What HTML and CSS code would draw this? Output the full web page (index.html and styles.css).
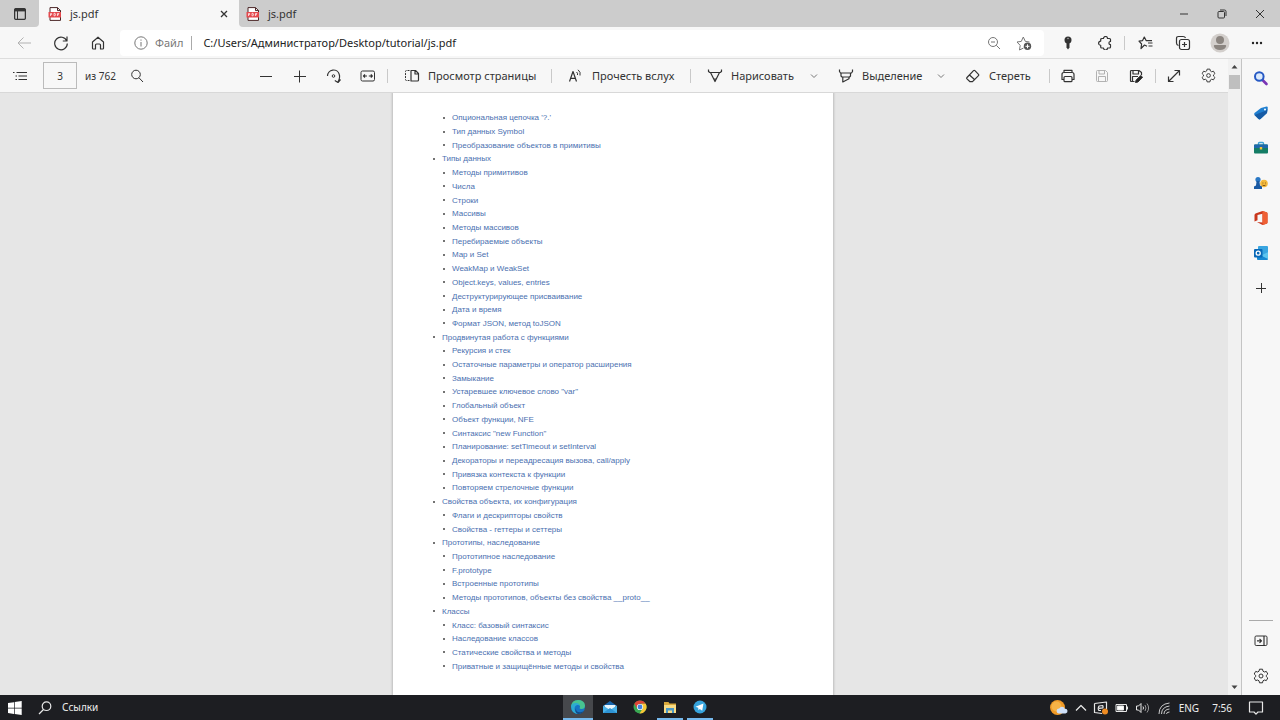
FILE: index.html
```
<!DOCTYPE html>
<html lang="ru">
<head>
<meta charset="utf-8">
<title>js.pdf</title>
<link rel="stylesheet" href="styles.css">
</head>
<body>
<svg class="defs" aria-hidden="true">
  <symbol id="pdf" viewBox="0 0 14 14"><path d="M2 .6h7.500l3 3v9.800H2z" fill="#fff" stroke="#4a2526"/><path d="M9.500.6v3h3" fill="none" stroke="#4a2526"/><path d="M.5 5h12.500v5.500H.5z" fill="#e5484d"/><path d="M2.500 9V6.500h1.200v1.200H2.500M6 6.300v2.500h1l.6-.6V7L7 6.300zM9.500 9V6.500h1.700M9.500 7.700H11" fill="none" stroke="#fff" stroke-width=".7"/></symbol>
  <symbol id="chev" viewBox="0 0 8 8"><path d="M1 2.500l3 3 3-3"/></symbol>
  <symbol id="gear" viewBox="0 0 16 16"><path d="M6.500 1.200h3l.5 2 1.300.8 2-.6 1.500 2.600L13.300 7.400v1.200l1.500 1.400-1.500 2.600-2-.6-1.300.8-.5 2h-3l-.5-2-1.300-.8-2 .6L1.200 10l1.500-1.400V7.400L1.200 6l1.500-2.600 2 .6L6 3.200z"/><circle cx="8" cy="8" r="2"/></symbol>
</svg>

<header class="tabs">
  <button class="tab-menu" aria-label="Меню вкладок"><svg class="ic" width="12" height="12" viewBox="0 0 12 12"><rect x=".6" y=".6" width="10.800" height="10.800" rx="1.500" stroke-width="1.300"/><path d="M.6 2.200h10.800" stroke-width="2.400"/><path d="M3.500 3v8" stroke-width="1"/></svg></button>
  <div class="tab active"><svg width="14" height="14"><use href="#pdf"/></svg><span class="tab-name">js.pdf</span><button class="tab-close" aria-label="Закрыть вкладку"><svg class="ic" width="8" height="8" viewBox="0 0 8 8"><path d="M1 1l6 6M7 1L1 7" stroke-width="1.300"/></svg></button></div>
  <div class="tab rest"><svg width="14" height="14"><use href="#pdf"/></svg><span class="tab-name">js.pdf</span></div>
  <div class="window-controls">
    <button aria-label="Свернуть"><svg class="ic" width="10" height="10" viewBox="0 0 10 10"><path d="M1 5h8"/></svg></button>
    <button aria-label="Восстановить"><svg class="ic" width="10" height="10" viewBox="0 0 10 10"><rect x="1" y="2.500" width="6.500" height="6.500" rx="1"/><path d="M3 1h4.500Q9 1 9 2.500V7"/></svg></button>
    <button aria-label="Закрыть"><svg class="ic" width="10" height="10" viewBox="0 0 10 10"><path d="M1 1l8 8M9 1L1 9"/></svg></button>
  </div>
</header>

<nav class="address-row">
  <button class="nav-btn disabled" aria-label="Назад"><svg class="ic" width="16" height="16" viewBox="0 0 16 16"><path d="M15 8H2M7.500 2.500L2 8l5.500 5.500"/></svg></button>
  <button class="nav-btn" aria-label="Обновить"><svg class="ic" width="16" height="16" viewBox="0 0 16 16"><path d="M13.800 6A6.300 6.300 0 1 0 14.300 8.500M14 1.500V6H9.800" stroke-width="1.200"/></svg></button>
  <button class="nav-btn" aria-label="Домой"><svg class="ic" width="14" height="14" viewBox="0 0 14 14"><path d="M1.500 6L7 1.200 12.500 6v6.200q0 .8-.8.800H9.500V9q0-1-1-1h-3q-1 0-1 1v4H2.300q-.8 0-.8-.8z" stroke-width="1.200"/></svg></button>
  <div class="address">
    <svg class="ic soft" width="14" height="14" viewBox="0 0 14 14"><circle cx="7" cy="7" r="6.200"/><path d="M7 6v4.500M7 3.500v1.200"/></svg>
    <span class="scheme">Файл</span>
    <input class="url" aria-label="Адрес" value="C:/Users/Администратор/Desktop/tutorial/js.pdf">
    <button class="addr-btn" aria-label="Масштаб"><svg class="ic soft" width="14" height="14" viewBox="0 0 14 14"><circle cx="6" cy="6" r="4.500"/><path d="M9.300 9.300l3.700 3.700M4 6h4"/></svg></button>
    <button class="addr-btn" aria-label="В избранное"><svg class="ic" width="16" height="16" viewBox="0 0 16 16"><path d="M7.500 13L3.500 15l.7-4.600L1 7l4.300-.6 2-4.400 2 4.400L13.500 7" stroke="#777"/><circle cx="11.500" cy="11.300" r="3.700" fill="#555" stroke="none"/><path d="M11.500 9.300v4M9.500 11.300h4" stroke="#fff"/></svg></button>
  </div>
  <button class="nav-btn" aria-label="Пароли"><svg width="10" height="14" viewBox="0 0 10 14"><circle cx="5" cy="4" r="3.500" fill="#333"/><path d="M3.500 6h3v5.500L5 13.500l-1.500-2z" fill="#333"/><circle cx="5" cy="2.500" r=".8" fill="#aaa"/></svg></button>
  <button class="nav-btn" aria-label="Расширения"><svg class="ic" width="14" height="14" viewBox="0 0 14 14"><path d="M4 2.500h1.500a2 2 0 0 1 4 0h2q1 0 1 1V5.500a1.600 1.600 0 0 0 0 3.200V11q0 1-1 1H9.500a2 2 0 0 1-4 0H3.700q-1 0-1-1V9.300a2.100 2.100 0 0 1 0-4.200V3.500q0-1 1.300-1z" stroke-width="1.200"/></svg></button>
  <span class="sep"></span>
  <button class="nav-btn" aria-label="Избранное"><svg class="ic" width="16" height="16" viewBox="0 0 16 16"><path d="M9 11.200L6.500 10 3 13.500 3.600 9 1 6.200l3.600-.6L6.300 2l1.800 3.600H14M10 8h4.500M10.500 11h4" stroke-width="1.200"/></svg></button>
  <button class="nav-btn" aria-label="Коллекции"><svg class="ic" width="16" height="16" viewBox="0 0 16 16"><path d="M3.500 10.500Q1.500 10 1.500 8V3.500q0-2 2-2H8q2 0 2.500 1.500" stroke-width="1.200"/><rect x="4.500" y="4.500" width="10" height="10" rx="2" stroke-width="1.200"/><path d="M9.500 7v5M7 9.500h5" stroke-width="1.200"/></svg></button>
  <button class="nav-btn" aria-label="Профиль"><svg width="20" height="20" viewBox="0 0 20 20"><circle cx="10" cy="10" r="9.500" fill="#d3cfcc"/><circle cx="10" cy="7" r="4" fill="#8b8580"/><path d="M3.800 13q0-1 1-1h10.400q1 0 1 1-1 4-6.200 4t-6.200-4z" fill="#8b8580"/></svg></button>
  <button class="nav-btn" aria-label="Меню"><svg width="14" height="4" viewBox="0 0 14 4"><g fill="#222"><circle cx="3" cy="2" r="1.200"/><circle cx="7" cy="2" r="1.200"/><circle cx="11" cy="2" r="1.200"/></g></svg></button>
</nav>

<main class="workspace">
  <section class="viewer">
    <div class="toolbar">
      <button class="tool" aria-label="Содержание"><svg class="ic" width="14" height="12" viewBox="0 0 14 12"><path d="M3.500 2.500H14M5.500 6H14M5.500 9.500H14M0 2.500h1.500M2.500 6H4M2.500 9.500H4" stroke-width="1.200"/></svg></button>
      <input class="page-no" aria-label="Страница" value="3">
      <span class="page-total">из 762</span>
      <button class="tool" aria-label="Найти"><svg class="ic" width="14" height="14" viewBox="0 0 14 14"><circle cx="6" cy="5.500" r="4.300"/><path d="M9 8.800l4 4.200"/></svg></button>
      <div class="zoom-group">
        <button class="tool" aria-label="Уменьшить"><svg class="ic" width="14" height="14" viewBox="0 0 14 14"><path d="M1 7.500h12"/></svg></button>
        <button class="tool" aria-label="Увеличить"><svg class="ic" width="14" height="14" viewBox="0 0 14 14"><path d="M1 7.500h12M6.500 1.500v12"/></svg></button>
        <button class="tool" aria-label="Повернуть"><svg class="ic" width="16" height="16" viewBox="0 0 16 16"><path d="M1.500 8A6 6 0 0 1 13.300 6.500Q14.300 9.500 12 14M8.800 12.500L12 14.500 14.500 11.500" stroke-width="1.200"/><circle cx="7.500" cy="8" r="1.300"/></svg></button>
        <button class="tool" aria-label="По ширине"><svg class="ic" width="16" height="12" viewBox="0 0 16 12"><rect x="1" y="1" width="13.500" height="10" rx="1.500"/><path d="M3.500 6H7M8.800 6h3.500M5 4.500L3.500 6 5 7.500M10.800 4.500L12.300 6l-1.500 1.500" stroke-width="1.200"/></svg></button>
      </div>
      <span class="sep"></span>
      <button class="tool labelled view"><svg class="ic" width="16" height="14" viewBox="0 0 16 14"><path d="M5.500 1.500h-3q-1 0-1 1v8q0 1 1 1h3" stroke-dasharray="2 1"/><path d="M7 1.500h4.500l3 3V11q0 1-1 1H7zM11 1.500V5h3.500" stroke-width="1.200"/></svg>Просмотр страницы</button>
      <span class="sep"></span>
      <button class="tool labelled read"><svg class="ic" width="16" height="14" viewBox="0 0 16 14"><path d="M1.500 12.500L5 2.500l3.500 10M2.700 9.300h4.800" stroke-width="1.200"/><path d="M8.500 3q1.500 1 1 3M10 .8q3 2.200 2 5.700"/></svg>Прочесть вслух</button>
      <span class="sep"></span>
      <button class="tool labelled draw"><svg class="ic" width="16" height="14" viewBox="0 0 16 14"><path d="M1.500.5v2l1.300 1h10.400l1.300-1v-2M3.500 3.500L8 12.500l4.500-9M6.500 10h3" stroke-width="1.200"/></svg>Нарисовать<svg class="ic chev" width="8" height="8"><use href="#chev"/></svg></button>
      <button class="tool labelled mark"><svg class="ic" width="16" height="14" viewBox="0 0 16 14"><path d="M1.500.5v2l1 1.500h11l1-1.500v-2M3 4v3l1 1h7.500l1-1V4M4.800 8v5L11 9.800V8" stroke-width="1.200"/></svg>Выделение<svg class="ic chev" width="8" height="8"><use href="#chev"/></svg></button>
      <button class="tool labelled erase"><svg class="ic" width="16" height="14" viewBox="0 0 16 14"><path d="M2 8.500L8.500 1.700q.7-.7 1.400 0l3.600 3.600q.7.700 0 1.400L7.500 12.700H5L2 9.900q-.7-.7 0-1.400zM4.500 6L10 11" stroke-width="1.200"/></svg>Стереть</button>
      <div class="file-group">
        <span class="sep"></span>
        <button class="tool" aria-label="Печать"><svg class="ic" width="16" height="14" viewBox="0 0 16 14"><path d="M4 3.500V1.300h8v2.200M4 10.500H2V5.500q0-2 2-2h8q2 0 2 2v5h-2" stroke-width="1.200"/><rect x="4" y="7.500" width="8" height="5.200" rx="1" stroke-width="1.200"/></svg></button>
        <button class="tool disabled" aria-label="Сохранить"><svg class="ic" width="14" height="14" viewBox="0 0 14 14"><path d="M1.500 2.500q0-1 1-1h8l2 2v8q0 1-1 1h-9q-1 0-1-1zM4 1.500V5h5.500V1.500M3.500 12.500v-5h7v5"/></svg></button>
        <button class="tool" aria-label="Сохранить как"><svg class="ic" width="14" height="14" viewBox="0 0 14 14"><path d="M5.500 12.500h-3q-1 0-1-1v-9q0-1 1-1h7.500l2.500 2V6M4 1.500V5h5.500V1.500M3.500 12V7.500H9" stroke-width="1.200"/><path d="M6.500 13.500l.6-2.500L11.800 6.500l1.800 1.700L9 13z" fill="#222"/></svg></button>
        <span class="sep"></span>
        <button class="tool" aria-label="Во весь экран"><svg class="ic" width="14" height="14" viewBox="0 0 14 14"><path d="M1.500 12.500l11-11M7.500 1.500h5v5M1.500 7.500v5h5" stroke-width="1.200"/></svg></button>
        <button class="tool" aria-label="Параметры"><svg class="ic" width="15" height="15"><use href="#gear"/></svg></button>
      </div>
    </div>
    <div class="canvas">
      <article class="page">
        <ul class="toc">
          <li class="sub"><a href="#">Опциональная цепочка '?.'</a></li>
          <li class="sub"><a href="#">Тип данных Symbol</a></li>
          <li class="sub"><a href="#">Преобразование объектов в примитивы</a></li>
          <li><a href="#">Типы данных</a></li>
          <li class="sub"><a href="#">Методы примитивов</a></li>
          <li class="sub"><a href="#">Числа</a></li>
          <li class="sub"><a href="#">Строки</a></li>
          <li class="sub"><a href="#">Массивы</a></li>
          <li class="sub"><a href="#">Методы массивов</a></li>
          <li class="sub"><a href="#">Перебираемые объекты</a></li>
          <li class="sub"><a href="#">Map и Set</a></li>
          <li class="sub"><a href="#">WeakMap и WeakSet</a></li>
          <li class="sub"><a href="#">Object.keys, values, entries</a></li>
          <li class="sub"><a href="#">Деструктурирующее присваивание</a></li>
          <li class="sub"><a href="#">Дата и время</a></li>
          <li class="sub"><a href="#">Формат JSON, метод toJSON</a></li>
          <li><a href="#">Продвинутая работа с функциями</a></li>
          <li class="sub"><a href="#">Рекурсия и стек</a></li>
          <li class="sub"><a href="#">Остаточные параметры и оператор расширения</a></li>
          <li class="sub"><a href="#">Замыкание</a></li>
          <li class="sub"><a href="#">Устаревшее ключевое слово "var"</a></li>
          <li class="sub"><a href="#">Глобальный объект</a></li>
          <li class="sub"><a href="#">Объект функции, NFE</a></li>
          <li class="sub"><a href="#">Синтаксис "new Function"</a></li>
          <li class="sub"><a href="#">Планирование: setTimeout и setInterval</a></li>
          <li class="sub"><a href="#">Декораторы и переадресация вызова, call/apply</a></li>
          <li class="sub"><a href="#">Привязка контекста к функции</a></li>
          <li class="sub"><a href="#">Повторяем стрелочные функции</a></li>
          <li><a href="#">Свойства объекта, их конфигурация</a></li>
          <li class="sub"><a href="#">Флаги и дескрипторы свойств</a></li>
          <li class="sub"><a href="#">Свойства - геттеры и сеттеры</a></li>
          <li><a href="#">Прототипы, наследование</a></li>
          <li class="sub"><a href="#">Прототипное наследование</a></li>
          <li class="sub"><a href="#">F.prototype</a></li>
          <li class="sub"><a href="#">Встроенные прототипы</a></li>
          <li class="sub"><a href="#">Методы прототипов, объекты без свойства __proto__</a></li>
          <li><a href="#">Классы</a></li>
          <li class="sub"><a href="#">Класс: базовый синтаксис</a></li>
          <li class="sub"><a href="#">Наследование классов</a></li>
          <li class="sub"><a href="#">Статические свойства и методы</a></li>
          <li class="sub"><a href="#">Приватные и защищённые методы и свойства</a></li>
        </ul>
      </article>
    </div>
  </section>

  <div class="scrollbar">
    <svg width="7" height="5" viewBox="0 0 7 5"><path d="M.5 4.500L3.500 1l3 3.500z" fill="#444"/></svg>
    <div class="thumb"></div>
    <svg class="down" width="7" height="5" viewBox="0 0 7 5"><path d="M.5.5L3.500 4l3-3.500z" fill="#444"/></svg>
  </div>

  <aside class="sidebar">
    <button aria-label="Поиск"><svg width="16" height="16" viewBox="0 0 16 16"><path d="M9.500 10l4 4" stroke="#7a35b5" stroke-width="2.600" stroke-linecap="round"/><circle cx="6.300" cy="6.500" r="4.300" fill="#dbeafc" stroke="#2659c4" stroke-width="2"/></svg></button>
    <button aria-label="Покупки"><svg width="16" height="16" viewBox="0 0 16 16"><path d="M8 3l5.500-1.500q1.300 0 1.300 1.300L14 8l-6.500 6q-1 .8-2 0L1.500 10q-.8-1 0-2z" fill="#1f7fd0"/><path d="M1.500 10L12 6l2.500-2L14 8l-6.500 6q-1 .8-2 0z" fill="#165ba5"/><circle cx="12" cy="4.500" r="1" fill="#fff"/></svg></button>
    <button aria-label="Инструменты"><svg width="16" height="16" viewBox="0 0 16 16"><path d="M5.500 5V3.500q0-1 1-1h3q1 0 1 1V5" fill="none" stroke="#3da2d5" stroke-width="1.400"/><rect x="1" y="4.500" width="14" height="9" rx="1" fill="#147d65"/><path d="M1 5.500q0-1 1-1h12q1 0 1 1V8H1z" fill="#1f68ad"/><path d="M6.800 7h2.400v2.500H6.800z" fill="#f3c23a"/></svg></button>
    <button aria-label="Игры"><svg width="16" height="16" viewBox="0 0 16 16"><circle cx="11" cy="8.500" r="3.800" fill="#f3b93c"/><path d="M9.500 8h.8M12 8h.8M9.500 10.200q1.500 1 3 0" stroke="#815415" fill="none"/><circle cx="5" cy="4.500" r="2.600" fill="#2a78c5"/><path d="M3.600 6h2.800L7 10.500l2 1V14H1v-2.500l2-1z" fill="#1b5aa3"/></svg></button>
    <button aria-label="Office"><svg width="16" height="16" viewBox="0 0 16 16"><path d="M9.500 1L2.500 3.500Q1.500 4 1.500 5v6.500l3-1.300V5l5-1.300v8.800L4 12l5.500 3 4-1.200q1-.4 1-1.400V3.700q0-1-1-1.400z" fill="#c9371d"/><path d="M9.500 1v14l4-1.200q1-.4 1-1.400V3.700q0-1-1-1.400z" fill="#ef6034"/></svg></button>
    <button aria-label="Outlook"><svg width="16" height="16" viewBox="0 0 16 16"><rect x="5" y="1" width="10" height="9" rx="1" fill="#39a5e0"/><path d="M4 7.500l6 2.500 5-3v7q0 1-1 1H5q-1 0-1-1z" fill="#1688d2"/><path d="M15 7v7l-7-3.500z" fill="#5dc5ef"/><rect x="1" y="4" width="8.500" height="8.500" rx="1" fill="#0869b8"/><circle cx="5.200" cy="8.200" r="2" fill="none" stroke="#fff" stroke-width="1.300"/></svg></button>
    <button aria-label="Добавить"><svg class="ic" width="12" height="12" viewBox="0 0 12 12"><path d="M1 6.500h10M6.500 1v10"/></svg></button>
    <div class="side-bottom">
      <button aria-label="Скрыть панель"><svg class="ic" width="14" height="12" viewBox="0 0 14 12"><rect x="1" y="1" width="12" height="9.500" rx="1.200"/><path d="M10 1v9.500M3 5.800h4.500M5.500 3.800l2 2-2 2" stroke-width="1.200"/></svg></button>
      <button aria-label="Параметры"><svg class="ic" width="16" height="16"><use href="#gear"/></svg></button>
    </div>
  </aside>
</main>

<footer class="taskbar">
  <button class="start" aria-label="Пуск"><svg width="14" height="14" viewBox="0 0 14 14"><path d="M0 2l6-.8v5.500H0zM6.700 1.100L13.700 0v6.700h-7zM0 7.400h6v5.500L0 12zM6.700 7.400h7V14l-7-1z" fill="#fff"/></svg></button>
  <button class="start find" aria-label="Поиск"><svg class="ic light" width="14" height="14" viewBox="0 0 14 14"><circle cx="8.500" cy="5.200" r="4.300" stroke-width="1.200"/><path d="M5.500 8.500L1 13" stroke-width="1.200"/></svg></button>
  <span class="links">Ссылки</span>
  <div class="apps">
    <button class="app current" aria-label="Edge"><svg width="16" height="16" viewBox="0 0 16 16"><circle cx="8" cy="8" r="7" fill="#1674c4"/><path d="M1 8Q1.500 1 8 1q6.500 0 7 5.500 0 3.500-3.500 3.500-2 0-2-1 .7-.7.500-2Q9.500 5 6.500 5 2.500 5 1 8z" fill="#47c490"/><path d="M1 7.500Q2 3.500 6.500 4q3 .3 3.300 3-1-1.200-2.500-1-2.700.5-2.700 3.700 0 3 3.400 5.300Q1.500 14.500 1 7.500z" fill="#2caad2"/><path d="M6 9q-.5 4.500 4.500 4.200 2-.2 3.500-1.500Q12 15 8 15 4 13 6 9z" fill="#124b86"/></svg></button>
    <button class="app" aria-label="Почта"><svg width="14" height="14" viewBox="0 0 14 14"><path d="M0 6l7-5 7 5z" fill="#1765ad"/><path d="M1.500 5h11v5h-11z" fill="#eaf6fd"/><path d="M0 5.500l7 4.500 7-4.500V13H0z" fill="#48b1e8"/><path d="M0 13l7-5 7 5z" fill="#2e93d4"/></svg></button>
    <button class="app" aria-label="Chrome"><svg width="14" height="14" viewBox="0 0 14 14"><circle cx="7" cy="7" r="6.500" fill="#39a853"/><path d="M1.300 3.800A6.500 6.500 0 0 1 12.700 3.800H7L4.200 8.600z" fill="#dd4537"/><path d="M12.700 3.800A6.500 6.500 0 0 1 6.500 13.500L9.800 8.600 8.500 3.800z" fill="#f6c636"/><circle cx="7" cy="7" r="3.100" fill="#fff"/><circle cx="7" cy="7" r="2.400" fill="#4381dd"/></svg></button>
    <button class="app open" aria-label="Проводник"><svg width="14" height="14" viewBox="0 0 14 14"><path d="M1 2h4.500l1 1.500H13V13H1z" fill="#d9a93c"/><path d="M1 5h12v8H1z" fill="#f8dc85"/><path d="M3 8h8v5H9v-2.500H5V13H3z" fill="#4c9ac7"/></svg></button>
    <button class="app open" aria-label="Telegram"><svg width="14" height="14" viewBox="0 0 14 14"><circle cx="7" cy="7" r="6.500" fill="#36a3dc"/><path d="M2.500 6.800l8-3.200-1.300 7.100L6.800 9l-1.300 1.200-.3-2.500z" fill="#fff"/></svg></button>
  </div>
  <div class="tray">
    <svg class="weather" width="20" height="18" viewBox="0 0 20 18"><circle cx="8.500" cy="8.500" r="7.500" fill="#f09a27"/><circle cx="7.500" cy="7.500" r="5" fill="#f7b347"/><path d="M10 14.500a2.500 2.500 0 0 1 .3-5 3 3 0 0 1 5.500.3 2.300 2.300 0 0 1 .7 4.700z" fill="#cfe0f8"/></svg>
    <svg class="ic light" width="12" height="12" viewBox="0 0 12 12"><path d="M1 8.500l5-5 5 5" stroke-width="1.200"/></svg>
    <svg class="ic light" width="16" height="14" viewBox="0 0 16 14"><path d="M1.500 2.500L13.500 1v7M1.500 2.500v9L9 12.500M10 4.500L6 5q-1.500 3 0 4.500h2M6 7.300l4-.5V4.500" stroke-width="1.200"/><circle cx="12" cy="10.500" r="3" fill="#ee8b22" stroke="none"/></svg>
    <svg class="ic light" width="14" height="10" viewBox="0 0 14 10"><rect x="1" y="1.500" width="10.500" height="7"/><path d="M2.500 3h6v4h-6z" fill="#fff"/><path d="M12.500 3.500v3"/></svg>
    <svg class="ic light" width="16" height="12" viewBox="0 0 16 12"><path d="M1.500 4h2L6 1.500v9L3.500 8h-2zM8 4.500q1 1.500 0 3"/><path d="M10 3q2 3 0 6M12 1.500q3.200 4.500 0 9" opacity=".6"/></svg>
    <svg class="ic light" width="14" height="14" viewBox="0 0 14 14"><path d="M2 13Q2 3 12.500 2M4.500 13q0-7 8-8M7 13q0-4.500 5.500-5M9.500 13q0-2 3-2" opacity=".85"/></svg>
    <span class="lang">ENG</span>
    <time class="clock">7:56</time>
    <button class="notes" aria-label="Уведомления"><svg class="ic light" width="16" height="14" viewBox="0 0 16 14"><path d="M1.500 1h13v10H10l-2 2.200L6 11H1.500z" stroke-width="1.200"/></svg></button>
  </div>
</footer>
</body>
</html>
```

FILE: styles.css
```
* { box-sizing: border-box; }
body {
  margin: 0;
  height: 100vh;
  display: flex;
  flex-direction: column;
  overflow: hidden;
  background: #f7f7f7;
  color: #333;
  font-family: "Noto Sans", "Open Sans", sans-serif;
  font-size: 11px;
}
button, input {
  margin: 0;
  padding: 0;
  border: 0;
  background: none;
  color: inherit;
  font: inherit;
}
button {
  display: flex;
  align-items: center;
  justify-content: center;
  flex: none;
  white-space: nowrap;
}
svg { flex: none; }
.defs { position: absolute; width: 0; height: 0; }
.ic { fill: none; stroke: #333; stroke-linejoin: round; }
.ic.soft { stroke: #777; }
.ic.light { stroke: #e8e8e8; }
.disabled { opacity: 0.35; }
.sep { flex: none; width: 1px; height: 14px; background: #c9c9c9; }

/* Tab strip */
.tabs { display: flex; height: 27px; background: #f7f7f7; }
.tab-menu { width: 39px; background: #ccc; border-bottom-right-radius: 4px; }
.tab { display: flex; align-items: center; gap: 8px; padding: 0 9px; }
.tab.active { width: 200px; }
.tab-name { flex: 1; }
.tab-close { width: 12px; }
.rest { flex: 1; background: #ccc; border-bottom-left-radius: 4px; padding-left: 7px; }
.window-controls { display: flex; background: #ccc; padding-right: 1px; }
.window-controls button { width: 38px; }

/* Address row */
.address-row {
  display: flex;
  align-items: center;
  height: 32px;
  padding: 0 5px;
  border-bottom: 1px solid #ddd;
}
.address-row .sep { margin: 0 2px 0 1px; }
.nav-btn { width: 37px; height: 28px; }
.address {
  flex: 1;
  display: flex;
  align-items: center;
  height: 26px;
  margin: 0 5px 0 4px;
  padding: 0 5px 0 14px;
  border-radius: 4px;
  background: #fff;
}
.scheme {
  margin: 0 11px 0 7px;
  padding-right: 8px;
  border-right: 1px solid #aaa;
  color: #777;
  line-height: 14px;
}
.url { flex: 1; min-width: 0; color: #222; outline: 0; }
.addr-btn { width: 30px; height: 26px; }

/* Work area */
.workspace { flex: 1; display: flex; min-height: 0; }
.viewer { flex: 1; min-width: 0; display: flex; flex-direction: column; }
.toolbar {
  display: flex;
  align-items: center;
  height: 34px;
  padding: 0 3px;
  border-bottom: 1px solid #d8d8d8;
}
.tool { width: 34px; height: 28px; }
.page-no {
  width: 34px;
  height: 27px;
  margin: 0 8px 0 6px;
  border: 1px solid #bbb;
  text-align: center;
  font-size: 10px;
}
.page-total { width: 35px; font-size: 10px; white-space: nowrap; }
.zoom-group { display: flex; margin: 0 2px 0 95px; }
.labelled { justify-content: flex-start; gap: 8px; padding-left: 16px; }
.view { width: 163px; }
.read { width: 138px; }
.draw { width: 131px; }
.mark { width: 127px; }
.erase { width: 82px; }
.chev { margin: 0 4px 0 auto; stroke: #777; }
.file-group { display: flex; align-items: center; margin-left: auto; }
.file-group .sep { margin: 0 1px 0 2px; }

.canvas {
  flex: 1;
  min-height: 0;
  display: flex;
  justify-content: center;
  padding-right: 2px;
  background: #e6e6e6;
}
.page {
  display: flex;
  width: 440px;
  padding: 18px 40px 22px;
  background: #fff;
  box-shadow: 0 0 2px 1px #bdbdbd;
  clip-path: inset(0 -4px);
}
.toc {
  flex: 1;
  display: grid;
  grid-auto-rows: 1fr;
  margin: 0;
  padding: 0;
  list-style: none;
  font-family: "Liberation Sans", Arial, sans-serif;
  font-size: 8px;
  line-height: 13px;
}
.toc li { display: flex; align-items: center; white-space: nowrap; }
.toc li::before {
  content: "";
  width: 2px;
  height: 2px;
  margin-right: 7px;
  border-radius: 1px;
  background: #444;
}
.toc .sub { padding-left: 10px; }
.toc a { color: #4a70b0; text-decoration: none; }

.scrollbar {
  display: flex;
  flex-direction: column;
  align-items: center;
  width: 13px;
  padding: 5px 0;
  background: #f1f1f1;
}
.thumb { width: 11px; height: 14px; margin-top: 6px; background: #bfbfbf; }
.down { margin-top: auto; }

.sidebar {
  display: flex;
  flex-direction: column;
  align-items: center;
  width: 39px;
  padding: 1px 1px 0 0;
  border-left: 1px solid #c4c4c4;
}
.sidebar button { width: 35px; height: 35px; }
.side-bottom { margin-top: auto; padding: 2px 0; border-top: 1px solid #aaa; }
.side-bottom button { width: 24px; }

/* Taskbar */
.taskbar {
  display: flex;
  align-items: stretch;
  height: 25px;
  background: #1d1e22;
  color: #eee;
  font-size: 10px;
}
.start { width: 29px; }
.find { width: 31px; }
.links { flex: 15 1 0; padding-left: 2px; line-height: 24px; }
.apps { display: flex; gap: 4px; }
.app { width: 26px; border-bottom: 2px solid transparent; }
.app.open, .app.current { border-color: #76b9ed; }
.app.current { width: 30px; background: #46484c; }
.tray { flex: 17 1 0; display: flex; align-items: center; justify-content: flex-end; gap: 6px; }
.lang { margin-left: 2px; }
.clock { margin-left: 7px; }
.notes { width: 42px; height: 25px; padding-right: 16px; justify-content: flex-end; }
```
